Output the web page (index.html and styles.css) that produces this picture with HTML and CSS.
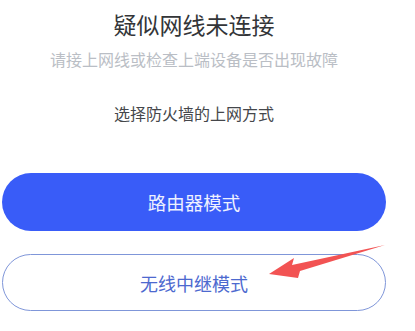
FILE: index.html
```html
<!DOCTYPE html>
<html lang="zh-CN">
<head>
<meta charset="utf-8">
<link rel="stylesheet" href="styles.css">
</head>
<body>
<main class="page">
  <h1 class="title">疑似网线未连接</h1>
  <p class="subtitle">请接上网线或检查上端设备是否出现故障</p>
  <p class="prompt">选择防火墙的上网方式</p>
  <button class="btn btn-primary">路由器模式</button>
  <button class="btn btn-outline">无线中继模式</button>
</main>
<svg class="arrow" width="415" height="331" viewBox="0 0 415 331">
  <polygon points="269,274 294,258 292,265 385,245 300,271 298,278" fill="#f25353"/>
</svg>
</body>
</html>
```

FILE: styles.css
```css
html, body {
  margin: 0;
  padding: 0;
  background: #ffffff;
}
body {
  width: 415px;
  height: 331px;
  overflow: hidden;
  position: relative;
  font-family: "Noto Sans CJK SC", "Noto Sans", sans-serif;
}
.page {
  width: 384px;
  margin-left: 2px;
  display: flex;
  flex-direction: column;
  align-items: center;
}
.title {
  margin: 12px 0 0;
  font-size: 23px;
  line-height: 25px;
  font-weight: 400;
  color: #333538;
}
.subtitle {
  margin: 13px 0 0;
  font-size: 16px;
  line-height: 18px;
  color: #babec5;
}
.prompt {
  margin: 36px 0 0;
  font-size: 16px;
  line-height: 18px;
  color: #45474b;
}
.btn {
  width: 384px;
  border-radius: 29px;
  font-family: inherit;
  font-size: 18.5px;
  padding: 0;
  cursor: pointer;
}
.btn-primary {
  margin-top: 51px;
  height: 58px;
  background: #395cf8;
  border: none;
  color: #eef1ff;
}
.btn-outline {
  margin-top: 23px;
  height: 57px;
  background: #ffffff;
  border: 1.5px solid #7f96d9;
  color: #4d69cf;
  font-size: 18px;
}
.arrow {
  position: absolute;
  left: 0;
  top: 0;
  pointer-events: none;
}
```
